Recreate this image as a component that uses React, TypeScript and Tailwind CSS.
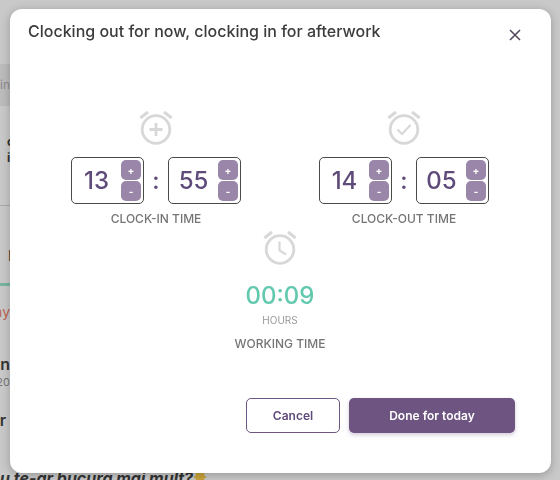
import { useState, type ReactNode } from 'react';

function AlarmIcon({ children }: { children: ReactNode }) {
  return (
    <svg
      width="36"
      height="38"
      viewBox="0 0 36 38"
      fill="none"
      stroke="#d8d8d8"
      strokeWidth="2.800"
      aria-hidden="true"
    >
      <circle cx="18" cy="20.500" r="13.800" />
      <path d="M2.400 9L10 3M33.600 9L26 3" strokeWidth="3" />
      {children}
    </svg>
  );
}

function TimeField({ label, initial, max }: { label: string; initial: number; max: number }) {
  const [value, setValue] = useState(initial);
  const step = (delta: number) => setValue((value + delta + max) % max);

  return (
    <div className="flex h-[47px] w-[73px] items-center rounded-[5px] border border-[#4a4a4a] pr-0.5">
      <input
        aria-label={label}
        value={String(value).padStart(2, '0')}
        onChange={(e) => setValue(Number(e.target.value) % max || 0)}
        className="w-0 min-w-0 flex-1 bg-transparent text-center text-2xl font-medium text-[#5f4b7a] outline-none"
      />
      <div className="flex flex-col gap-px">
        <button
          aria-label={`Increase ${label}`}
          onClick={() => step(1)}
          className="h-5 w-5 rounded-[5px] bg-[#9a86a8] text-[10px] leading-5 font-bold text-white"
        >
          +
        </button>
        <button
          aria-label={`Decrease ${label}`}
          onClick={() => step(-1)}
          className="h-5 w-5 rounded-[5px] bg-[#9a86a8] text-[10px] leading-5 font-bold text-white"
        >
          -
        </button>
      </div>
    </div>
  );
}

function ClockBlock({
  title,
  hours,
  minutes,
  children,
}: {
  title: string;
  hours: number;
  minutes: number;
  children: ReactNode;
}) {
  return (
    <div className="flex flex-col items-center">
      <AlarmIcon>{children}</AlarmIcon>
      <div className="mt-2.5 flex items-center">
        <TimeField label={`${title} hours`} initial={hours} max={24} />
        <span className="w-6 text-center text-2xl font-medium text-[#5f4b7a]">:</span>
        <TimeField label={`${title} minutes`} initial={minutes} max={60} />
      </div>
      <p className="mt-[5px] text-xs leading-5 font-medium text-[#757575]">{title}</p>
    </div>
  );
}

// Page behind the dialog, already dimmed by the overlay
function Backdrop() {
  return (
    <div aria-hidden="true" className="flex min-h-screen flex-col bg-[#c9c9c9] text-[#333]">
      <div className="flex w-2.5 flex-col items-end whitespace-nowrap">
        <div className="mt-16 h-[42px] bg-[#bcbcbc] text-xs leading-[42px] text-[#8c8c8c]">Min</div>
        <div className="h-[100px] w-2.5 border-b border-[#aaa] pt-7 pl-[7px] text-xs leading-4 font-bold">
          <p>o</p>
          <p>i</p>
        </div>
        <div className="h-20 w-2.5 border-b-3 border-[#78b5a0] pt-[42px] pl-2 text-sm leading-4">I</div>
        <p className="mt-4 text-sm leading-5 text-[#b96552]">any</p>
        <p className="mt-8 text-base leading-5 font-semibold">in</p>
        <p className="text-[11px] leading-4 text-[#777]">2020</p>
        <p className="mt-5 pr-1 text-base leading-5 font-semibold">r</p>
      </div>
      <div className="mt-auto flex h-3 items-start overflow-hidden">
        <p className="text-base leading-5 font-bold italic">u te-ar bucura mai mult?</p>
        <svg width="14" height="14" viewBox="0 0 14 14" className="mt-0.5 shrink-0" fill="#c9a53c">
          <path d="M7 0l1.500 3L12 2l-1 3.500L14 7l-3 1.500 1 3.500-3.500-1L7 14l-1.500-3L2 12l1-3.500L0 7l3-1.500L2 2l3.500 1z" />
        </svg>
      </div>
    </div>
  );
}

export default function App() {
  return (
    <div className="relative font-[Inter,sans-serif]">
      <Backdrop />
      <div className="fixed inset-0 py-[9px] pr-[9px] pl-2.5">
        <div
          role="dialog"
          aria-labelledby="clock-title"
          className="rounded-xl bg-white pb-10 shadow-[0_2px_10px_rgba(0,0,0,0.25)]"
        >
          <header className="flex items-start justify-between pt-2.5 pr-7 pl-[18px]">
            <h1 id="clock-title" className="text-base leading-6 font-medium text-[#3c3c3c]">
              Clocking out for now, clocking in for afterwork
            </h1>
            <button aria-label="Close" className="mt-1 flex h-6 w-4 items-center justify-center">
              <svg width="12" height="12" viewBox="0 0 12 12" stroke="#55485f" strokeWidth="1.600">
                <path d="M1 1l10 10M11 1L1 11" />
              </svg>
            </button>
          </header>

          <main className="mt-[62px] pr-px">
            <div className="mx-auto grid max-w-[496px] grid-cols-2">
              <ClockBlock title="CLOCK-IN TIME" hours={13} minutes={55}>
                <path d="M18 14v13M11.500 20.500h13" />
              </ClockBlock>
              <ClockBlock title="CLOCK-OUT TIME" hours={14} minutes={5}>
                <path d="M11.500 20.500l4.500 4.500 8.500-9" strokeWidth="2.200" />
              </ClockBlock>
            </div>
            <div className="flex flex-col items-center">
              <AlarmIcon>
                <path d="M17.500 12.500v9l6.500 4" strokeWidth="2.200" />
              </AlarmIcon>
              <p className="mt-[13px] text-2xl leading-8 font-medium text-[#62c9ae]">00:09</p>
              <p className="text-[10px] leading-4 text-[#999]">HOURS</p>
              <p className="mt-1.5 text-xs leading-5 font-medium text-[#757575]">WORKING TIME</p>
            </div>
          </main>

          <footer className="mt-11 flex justify-end gap-[9px] pr-9">
            <button className="h-[35px] w-[94px] rounded-[5px] border border-[#6e5680] text-xs font-semibold text-[#5f4b7a]">
              Cancel
            </button>
            <button className="h-[35px] w-[166px] rounded-[5px] bg-[#6e5480] text-xs font-semibold text-white shadow-[0_2px_4px_rgba(110,84,128,0.3)]">
              Done for today
            </button>
          </footer>
        </div>
      </div>
    </div>
  );
}
